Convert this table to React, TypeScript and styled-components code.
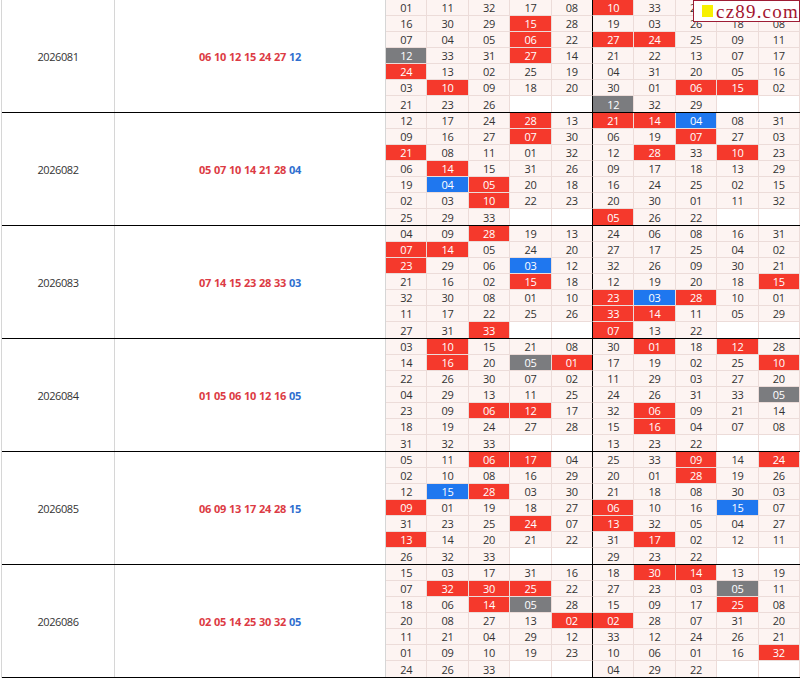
import React from 'react';
import styled, { createGlobalStyle } from 'styled-components';

const Global = createGlobalStyle`
  html, body { margin: 0; padding: 0; background: #ffffff; }
  body { font-family: "Open Sans", "Noto Sans", "Liberation Sans", sans-serif; }
`;

type Block = { period: string; reds: number[]; blue: number; g1: string[]; g2: string[] };

const blocks: Block[] = [
  {
    period: '2026081', reds: [6, 10, 12, 15, 24, 27], blue: 12,
    g1: ['01 11 32 17 08', '16 30 29 15 28', '07 04 05 06 22', '12 33 31 27 14', '24 13 02 25 19', '03 10 09 18 20', '21 23 26'],
    g2: ['10 33 23 28 14', '19 03 26 18 08', '27 24 25 09 11', '21 22 13 07 17', '04 31 20 05 16', '30 01 06 15 02', '12 32 29'],
  },
  {
    period: '2026082', reds: [5, 7, 10, 14, 21, 28], blue: 4,
    g1: ['12 17 24 28 13', '09 16 27 07 30', '21 08 11 01 32', '06 14 15 31 26', '19 04 05 20 18', '02 03 10 22 23', '25 29 33'],
    g2: ['21 14 04 08 31', '06 19 07 27 03', '12 28 33 10 23', '09 17 18 13 29', '16 24 25 02 15', '20 30 01 11 32', '05 26 22'],
  },
  {
    period: '2026083', reds: [7, 14, 15, 23, 28, 33], blue: 3,
    g1: ['04 09 28 19 13', '07 14 05 24 20', '23 29 06 03 12', '21 16 02 15 18', '32 30 08 01 10', '11 17 22 25 26', '27 31 33'],
    g2: ['24 06 08 16 31', '27 17 25 04 02', '32 26 09 30 21', '12 19 20 18 15', '23 03 28 10 01', '33 14 11 05 29', '07 13 22'],
  },
  {
    period: '2026084', reds: [1, 5, 6, 10, 12, 16], blue: 5,
    g1: ['03 10 15 21 08', '14 16 20 05 01', '22 26 30 07 02', '04 29 13 11 25', '23 09 06 12 17', '18 19 24 27 28', '31 32 33'],
    g2: ['30 01 18 12 28', '17 19 02 25 10', '11 29 03 27 20', '24 26 31 33 05', '32 06 09 21 14', '15 16 04 07 08', '13 23 22'],
  },
  {
    period: '2026085', reds: [6, 9, 13, 17, 24, 28], blue: 15,
    g1: ['05 11 06 17 04', '02 10 08 16 29', '12 15 28 03 30', '09 01 19 18 27', '31 23 25 24 07', '13 14 20 21 22', '26 32 33'],
    g2: ['25 33 09 14 24', '20 01 28 19 26', '21 18 08 30 03', '06 10 16 15 07', '13 32 05 04 27', '31 17 02 12 11', '29 23 22'],
  },
  {
    period: '2026086', reds: [2, 5, 14, 25, 30, 32], blue: 5,
    g1: ['15 03 17 31 16', '07 32 30 25 22', '18 06 14 05 28', '20 08 27 13 02', '11 21 04 29 12', '01 09 10 19 23', '24 26 33'],
    g2: ['18 30 14 13 19', '27 23 03 05 11', '15 09 17 25 08', '02 28 07 31 20', '33 12 24 26 21', '10 06 01 16 32', '04 29 22'],
  },
];

type Kind = 'plain' | 'red' | 'blue' | 'gray' | 'empty';

const bgFor: Record<Kind, string> = {
  plain: '#fdf4f2',
  red: '#f5392c',
  blue: '#1f77ef',
  gray: '#7b7c7f',
  empty: '#ffffff',
};

const Table = styled.div`
  position: relative;
  width: 799px;
  margin-left: 1px;
  border-left: 1px solid #d6d6d6;
  box-sizing: border-box;
`;

const BlockRow = styled.div`
  display: grid;
  grid-template-columns: 113px 271px 1fr;
  border-bottom: 1px solid #000000;
`;

const PeriodCell = styled.div`
  display: flex;
  align-items: center;
  justify-content: center;
  border-right: 1px solid #d6d6d6;
  font-size: 11px;
  letter-spacing: -0.4px;
  color: #333333;
`;

const DrawCell = styled.div`
  display: flex;
  align-items: center;
  justify-content: center;
  gap: 3px;
  border-right: 1px solid #d6d6d6;
  font-size: 11px;
  letter-spacing: -0.3px;
  font-weight: 700;
`;

const Ball = styled.span<{ $blue?: boolean }>`
  color: ${(p) => (p.$blue ? '#2f6fcf' : '#dc3b44')};
`;

const NumGrid = styled.div`
  display: grid;
  grid-template-columns: repeat(10, 1fr);
  grid-auto-rows: 16px;
`;

const Cell = styled.div<{ $kind: Kind; $divider: boolean; $last: boolean }>`
  box-sizing: border-box;
  display: flex;
  align-items: center;
  justify-content: center;
  font-size: 11px;
  letter-spacing: -0.3px;
  line-height: 1;
  background: ${(p) => bgFor[p.$kind]};
  color: ${(p) => (p.$kind === 'plain' || p.$kind === 'empty' ? '#333333' : '#ffffff')};
  border-right: 1px solid ${(p) => (p.$divider ? '#000000' : '#ecdcd9')};
  border-bottom: ${(p) => (p.$last ? '0' : '1px solid #ecdcd9')};
`;

const Watermark = styled.div`
  position: absolute;
  top: 0;
  right: 0;
  width: 107px;
  height: 22px;
  box-sizing: border-box;
  background: #ffffff;
  border: 1px solid #9e1c34;
  display: flex;
  align-items: center;
  padding-left: 8px;
  gap: 3px;
`;

const Square = styled.span`
  width: 11px;
  height: 12px;
  background: #f7f000;
  flex: none;
`;

const Domain = styled.span`
  font-family: "Liberation Serif", "DejaVu Serif", serif;
  font-size: 19px;
  letter-spacing: 1.2px;
  color: #a3152f;
  line-height: 1;
`;

function kindOf(n: number, b: Block): Kind {
  const isRed = b.reds.includes(n);
  const isBlue = b.blue === n;
  if (isRed && isBlue) return 'gray';
  if (isBlue) return 'blue';
  if (isRed) return 'red';
  return 'plain';
}

function buildCells(b: Block) {
  const cells: { text: string; kind: Kind }[] = [];
  for (let r = 0; r < 7; r++) {
    const left = b.g1[r].split(' ');
    const right = b.g2[r].split(' ');
    for (let c = 0; c < 5; c++) {
      const t = left[c];
      cells.push(t ? { text: t, kind: kindOf(parseInt(t, 10), b) } : { text: '', kind: 'empty' });
    }
    for (let c = 0; c < 5; c++) {
      const t = right[c];
      cells.push(t ? { text: t, kind: kindOf(parseInt(t, 10), b) } : { text: '', kind: 'empty' });
    }
  }
  return cells;
}

export default function App() {
  return (
    <>
      <Global />
      <Table>
        {blocks.map((b) => (
          <BlockRow key={b.period}>
            <PeriodCell>{b.period}</PeriodCell>
            <DrawCell>
              {b.reds.map((n) => (
                <Ball key={n}>{String(n).padStart(2, '0')}</Ball>
              ))}
              <Ball $blue>{String(b.blue).padStart(2, '0')}</Ball>
            </DrawCell>
            <NumGrid>
              {buildCells(b).map((c, i) => (
                <Cell key={i} $kind={c.kind} $divider={i % 10 === 4} $last={i >= 60}>
                  {c.text}
                </Cell>
              ))}
            </NumGrid>
          </BlockRow>
        ))}
        <Watermark>
          <Square />
          <Domain>cz89.com</Domain>
        </Watermark>
      </Table>
    </>
  );
}
